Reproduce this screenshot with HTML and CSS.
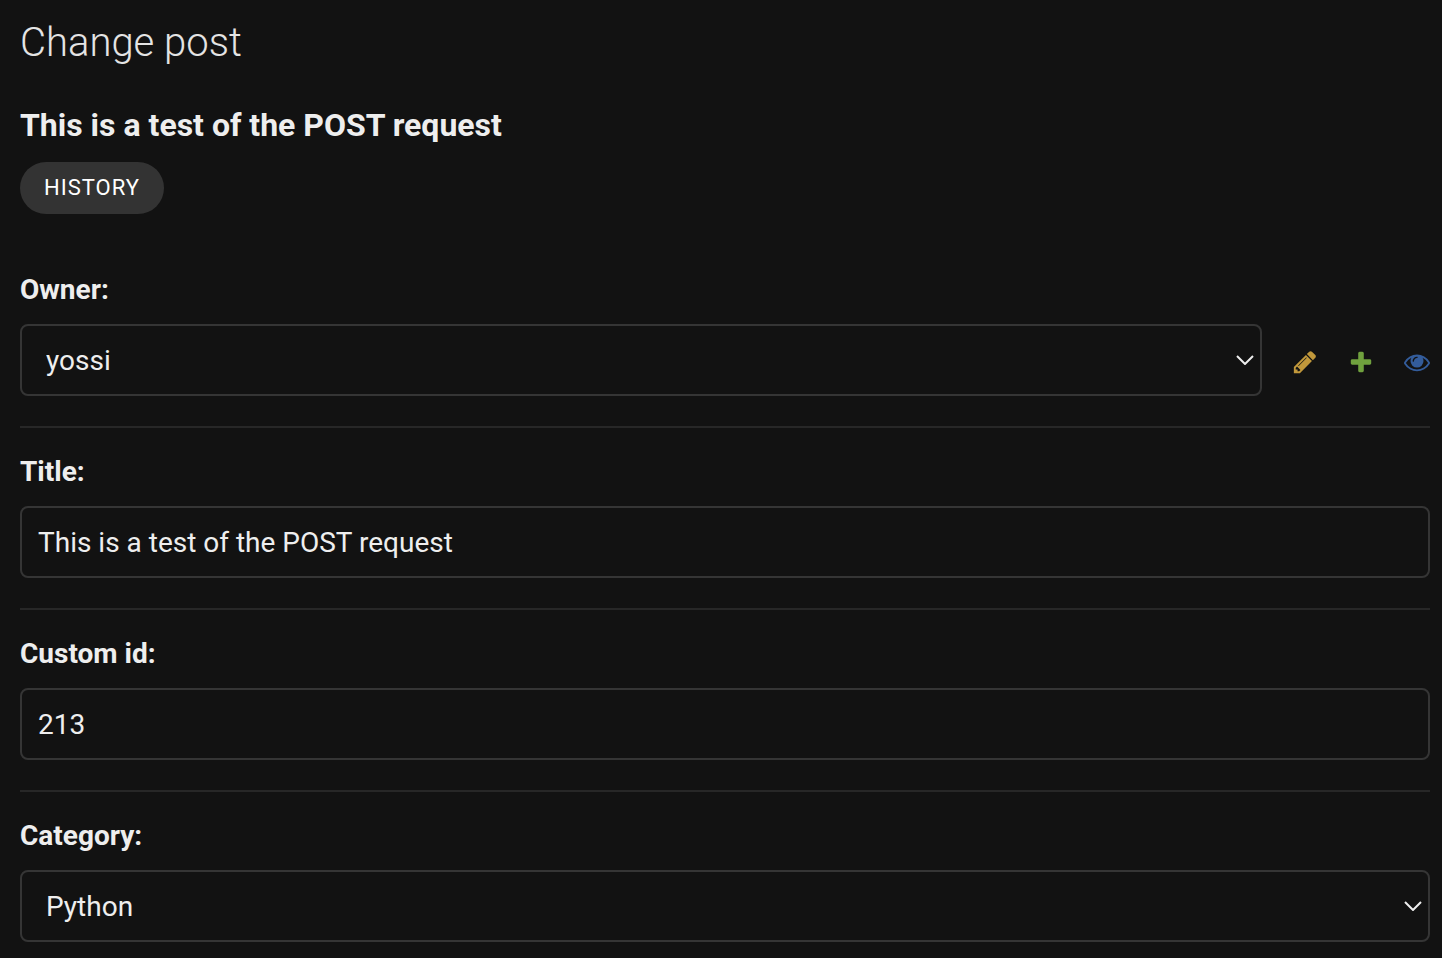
FILE: index.html
```
<!DOCTYPE html>
<html lang="en">
<head>
<meta charset="utf-8">
<meta name="viewport" content="width=device-width, initial-scale=1">
<title>Change post</title>
<link rel="stylesheet" href="styles.css">
</head>
<body>
<main class="content">
  <h1 class="page-title">Change post</h1>
  <h2 class="object-name">This is a test of the POST request</h2>
  <div class="tools"><a class="history-link" href="#history">HISTORY</a></div>
  <form class="post-form">
    <div class="form-row">
      <label class="field-label" for="owner">Owner:</label>
      <div class="related">
        <div class="select-wrap">
          <select class="field select" id="owner"><option>yossi</option></select>
          <svg class="chevron" viewBox="0 0 18 10" aria-hidden="true"><path d="M1 1l8 8 8-8"/></svg>
        </div>
        <a class="related-link edit" href="#edit" aria-label="Change user"><svg viewBox="0 0 1792 1792"><path d="M491 1536l91-91-235-235-91 91v107h128v128h107zm523-928q0-22-22-22-10 0-17 7l-542 542q-7 7-7 17 0 22 22 22 10 0 17-7l542-542q7-7 7-17zm-54-192l416 416-832 832h-416v-416zm683 96q0 53-37 90l-166 166-416-416 166-165q36-38 90-38 53 0 91 38l235 234q37 39 37 91z"/></svg></a>
        <a class="related-link add" href="#add" aria-label="Add user"><svg viewBox="0 0 1792 1792"><path d="M1600 796v192q0 40-28 68t-68 28h-416v416q0 40-28 68t-68 28h-192q-40 0-68-28t-28-68v-416h-416q-40 0-68-28t-28-68v-192q0-40 28-68t68-28h416v-416q0-40 28-68t68-28h192q40 0 68 28t28 68v416h416q40 0 68 28t28 68z"/></svg></a>
        <a class="related-link view" href="#view" aria-label="View user"><svg viewBox="0 0 1792 1792"><path d="M1664 960q-152-236-381-353 61 104 61 225 0 185-131.500 316.500t-316.500 131.500-316.500-131.500-131.500-316.500q0-121 61-225-229 117-381 353 133 205 333.500 326.500t434.500 121.500 434.500-121.500 333.500-326.500zm-720-384q0-20-14-34t-34-14q-125 0-214.500 89.500t-89.500 214.500q0 20 14 34t34 14 34-14 14-34q0-86 61-147t147-61q20 0 34-14t14-34zm848 384q0 34-20 69-140 230-376.500 368.500t-499.500 138.500-499.500-139-376.500-368q-20-35-20-69t20-69q140-229 376.500-368t499.500-139 499.500 139 376.500 368q20 35 20 69z"/></svg></a>
      </div>
    </div>
    <div class="form-row">
      <label class="field-label" for="title">Title:</label>
      <input class="field" id="title" type="text" value="This is a test of the POST request">
    </div>
    <div class="form-row">
      <label class="field-label" for="custom-id">Custom id:</label>
      <input class="field" id="custom-id" type="text" value="213">
    </div>
    <div class="form-row">
      <label class="field-label" for="category">Category:</label>
      <div class="select-wrap">
        <select class="field select" id="category"><option>Python</option></select>
        <svg class="chevron" viewBox="0 0 18 10" aria-hidden="true"><path d="M1 1l8 8 8-8"/></svg>
      </div>
    </div>
  </form>
</main>
</body>
</html>
```
FILE: styles.css
```
* { box-sizing: border-box; }
body {
  margin: 0;
  background: #121212;
  color: #eee;
  font-family: Roboto, sans-serif;
  font-size: 28px;
}
.content { padding: 18px 12px 0 20px; }
.page-title {
  margin: 0 0 34px;
  color: #e4e4e4;
  font-size: 40px;
  line-height: 50px;
  font-weight: 300;
}
.object-name {
  margin: 0 0 14px;
  font-size: 32px;
  line-height: 46px;
  font-weight: 700;
}
.tools { display: flex; margin-bottom: 32px; }
.history-link {
  padding: 0 24px;
  border-radius: 26px;
  background: #333;
  color: #fff;
  font-size: 22px;
  line-height: 52px;
  letter-spacing: 1px;
  text-decoration: none;
}
.form-row {
  padding: 26px 0 30px;
  border-bottom: 2px solid #272727;
}
.form-row:last-child {
  padding-bottom: 0;
  border-bottom: 0;
}
.field-label {
  display: block;
  margin-bottom: 16px;
  line-height: 36px;
  font-weight: 700;
}
.field {
  display: block;
  width: 100%;
  height: 72px;
  padding: 0 16px;
  border: 2px solid #353535;
  border-radius: 8px;
  background: #121212;
  color: #eee;
  font: inherit;
}
.select { appearance: none; padding: 0 40px 0 24px; }
.select-wrap { position: relative; flex: 1; }
.chevron {
  position: absolute;
  top: 31px;
  right: 8px;
  width: 18px;
  height: 10px;
  fill: none;
  stroke: #eee;
  stroke-width: 2;
  pointer-events: none;
}
.related { display: flex; align-items: center; gap: 30px; }
.related-link { display: block; padding-top: 4px; }
.related-link svg { display: block; width: 26px; height: 26px; }
.edit { fill: #c1983b; }
.add { fill: #70a13e; }
.view { fill: #335c9b; }
```
